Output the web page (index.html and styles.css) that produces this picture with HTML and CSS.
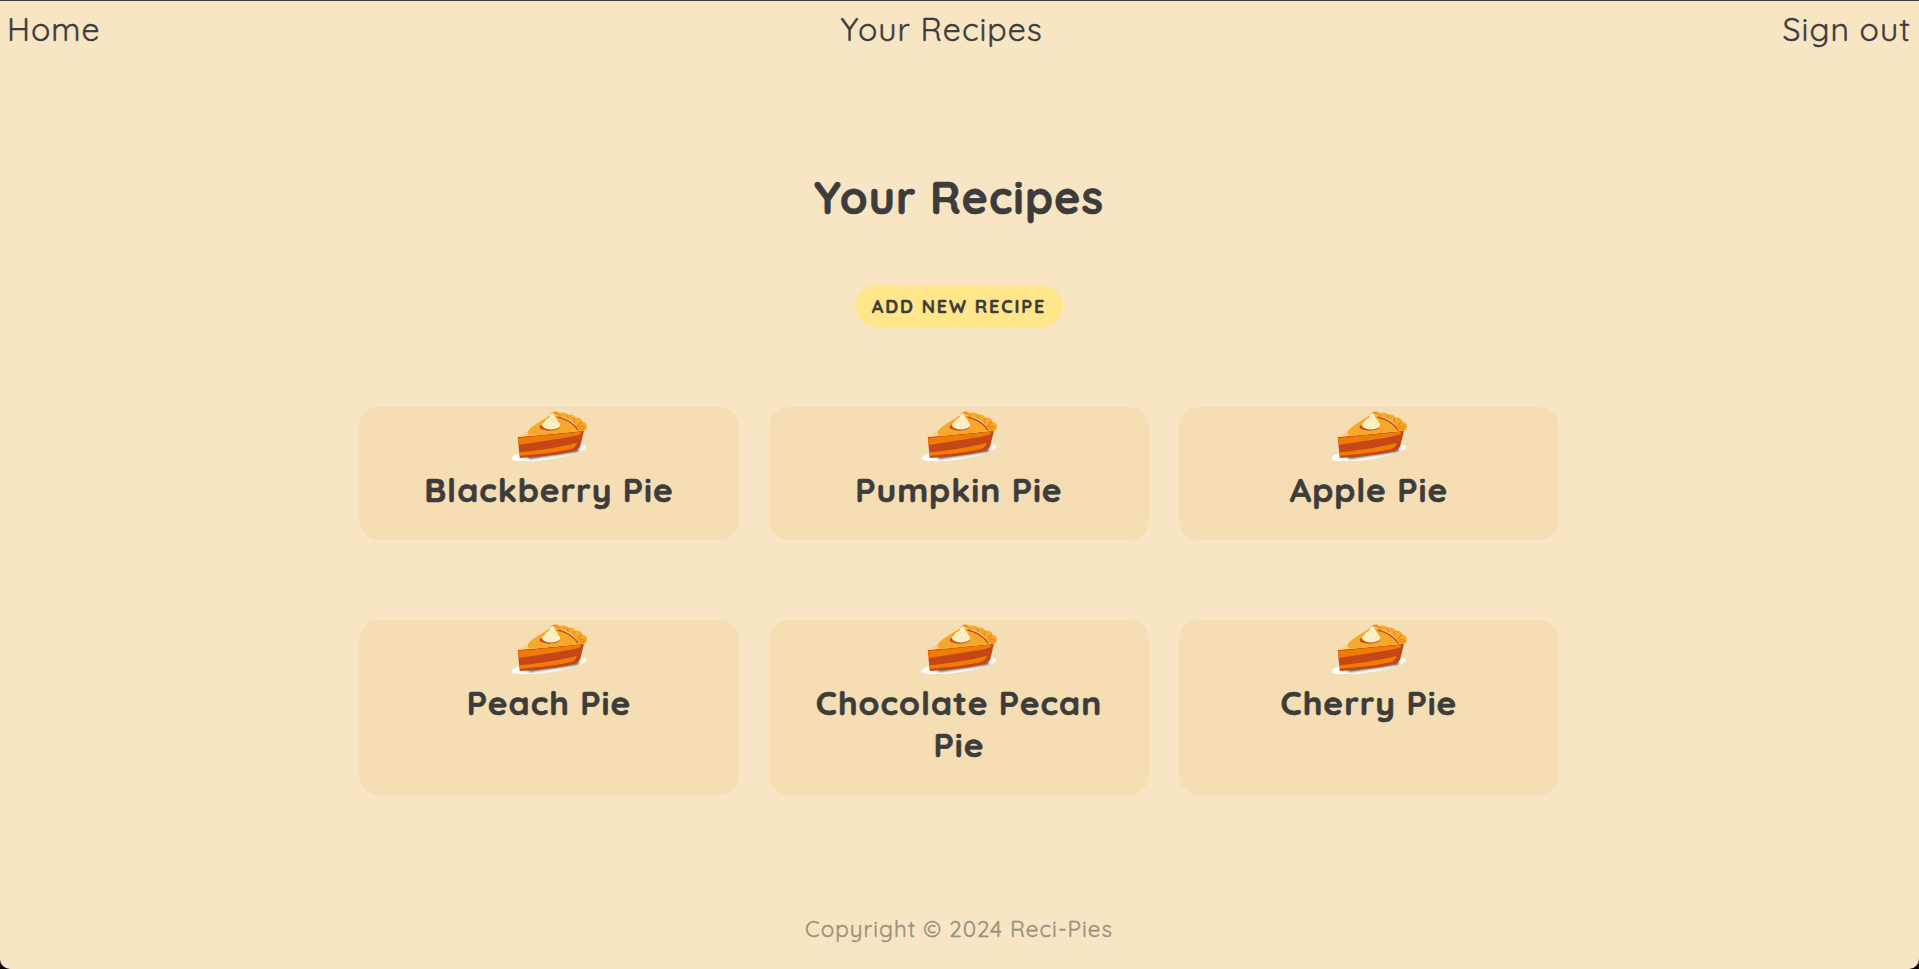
FILE: index.html
```
<!DOCTYPE html>
<html lang="en">
<head>
<meta charset="utf-8">
<title>Your Recipes</title>
<link rel="stylesheet" href="styles.css">
</head>
<body>
<svg class="defs" width="0" height="0" aria-hidden="true">
  <defs>
    <filter id="soft" x="-20%" y="-50%" width="140%" height="200%"><feGaussianBlur stdDeviation="4"/></filter>
    <clipPath id="plate-clip"><ellipse cx="148" cy="158" rx="112" ry="20" transform="rotate(-9 148 158)"/></clipPath>
    <symbol id="pie" viewBox="36 33 225 150" preserveAspectRatio="none">
      <ellipse cx="148" cy="158" rx="112" ry="20" transform="rotate(-9 148 158)" fill="#fff"/>
      <g clip-path="url(#plate-clip)"><path d="M90 176L240 154L232 144L80 164Z" fill="#4a4030" filter="url(#soft)"/></g>
      <path d="M56 111L252 92L241 139Q238 147 228 151Q190 166 62 174Z" fill="#c44715"/>
      <path d="M57 114L243 95L242 103Q215 113 60 134Z" fill="#f17c05"/>
      <path d="M62 157Q170 145 231 128Q227 142 214 147Q160 160 62 167Z" fill="#f17c05"/>
      <path d="M56 111L154 47Q163 42 178 48L236 80Q246 88 239 93Z" fill="#fbd184"/>
      <path d="M86 103Q80 92 110 72L148 48Q165 42 182 50L236 82Q244 90 236 94L120 106Q92 110 86 103Z" fill="#f7a72a"/>
      <path d="M174 51Q216 60 235 91" fill="none" stroke="#c9521a" stroke-width="4"/>
      <path d="M151 47C153 33 174 31 180 40C191 35 202 39 205 44C216 42 225 47 226 53C239 50 247 59 248 65C258 66 264 77 260 86C257 95 239 97 235 88C228 70 212 57 189 51L168 45C160 42 156 45 151 47Z" fill="#f7a72a"/>
      <path d="M157 42Q166 34 175 41M183 50Q178 46 180 41M207 57Q201 51 205 45M225 70Q219 61 226 54M236 82Q234 70 247 66M239 84C244 73 259 80 250 87Q244 91 239 84" fill="none" stroke="#e98312" stroke-width="3"/>
      <ellipse cx="150" cy="81" rx="30" ry="11" fill="#c4551a"/>
      <path d="M160 38C150 43 154 49 148 54C140 59 136 61 135 67C128 70 125 76 131 81C140 91 170 90 179 81C184 74 180 69 176 67C176 58 167 56 166 49C165 44 160 43 160 38Z" fill="#fff3cc"/>
      <path d="M157 50Q158 60 146 66Q138 72 140 80M162 55Q167 64 156 70Q150 75 152 83M170 66Q173 73 164 81" fill="none" stroke="#f6df9f" stroke-width="2.5"/>
    </symbol>
  </defs>
</svg>
<div class="page">
  <nav class="nav">
    <a>Home</a>
    <a>Your Recipes</a>
    <a>Sign out</a>
  </nav>
  <main class="main">
    <h1 class="title">Your Recipes</h1>
    <button class="add">ADD NEW RECIPE</button>
    <section class="grid">
      <article class="card"><svg class="pie"><use href="#pie"/></svg><h2 class="name">Blackberry Pie</h2></article>
      <article class="card"><svg class="pie"><use href="#pie"/></svg><h2 class="name">Pumpkin Pie</h2></article>
      <article class="card"><svg class="pie"><use href="#pie"/></svg><h2 class="name">Apple Pie</h2></article>
      <article class="card"><svg class="pie"><use href="#pie"/></svg><h2 class="name">Peach Pie</h2></article>
      <article class="card"><svg class="pie"><use href="#pie"/></svg><h2 class="name">Chocolate Pecan Pie</h2></article>
      <article class="card"><svg class="pie"><use href="#pie"/></svg><h2 class="name">Cherry Pie</h2></article>
    </section>
  </main>
  <footer class="footer">Copyright © 2024 Reci-Pies</footer>
</div>
</body>
</html>
```
FILE: styles.css
```
* { box-sizing: border-box; }
html { background: #0a0412; }
body {
  margin: 0;
  color: #3c3c3c;
  font-family: Quicksand, Lato, sans-serif;
  -webkit-text-stroke: 0.4px currentColor;
}
.defs { display: block; }
.page {
  display: flex;
  flex-direction: column;
  height: 969px;
  padding-right: 1px;
  overflow: hidden;
  background: #f7e5c4;
  border-top: 1px solid #3c3a40;
  border-radius: 0 0 10px 10px;
}
.nav {
  display: flex;
  justify-content: space-between;
  height: 58px;
  padding: 8px 7px 0 7px;
  font-size: 32px;
  line-height: 40px;
  letter-spacing: 1px;
}
.main {
  display: flex;
  flex-direction: column;
  align-items: center;
}
.title {
  margin: 110px 0 0;
  font-size: 44.8px;
  line-height: 56px;
  letter-spacing: 1px;
  -webkit-text-stroke-width: 0.7px;
}
.add {
  width: 208px;
  height: 42px;
  margin-top: 60px;
  padding: 1px 0 0;
  border: 0;
  border-radius: 21px;
  background: #ffe68a;
  color: #3c3c3c;
  font: 700 18px/41px Quicksand, Lato, sans-serif;
  letter-spacing: 1.9px;
}
.grid {
  display: grid;
  grid-template-columns: repeat(3, 380px);
  gap: 80px 30px;
  margin-top: 80px;
}
.card {
  display: flex;
  flex-direction: column;
  align-items: center;
  padding: 4px 40px 30px;
  border-radius: 20px;
  background: #f5deb3;
}
.pie { display: block; width: 76px; height: 50px; }
.name {
  margin: 7px 0 0;
  font-size: 33.6px;
  line-height: 42px;
  letter-spacing: 1px;
  text-align: center;
  -webkit-text-stroke-width: 0.6px;
}
.footer {
  margin-top: 119px;
  font-size: 22.4px;
  line-height: 30px;
  letter-spacing: 1px;
  text-align: center;
  color: #9b907c;
}
```
